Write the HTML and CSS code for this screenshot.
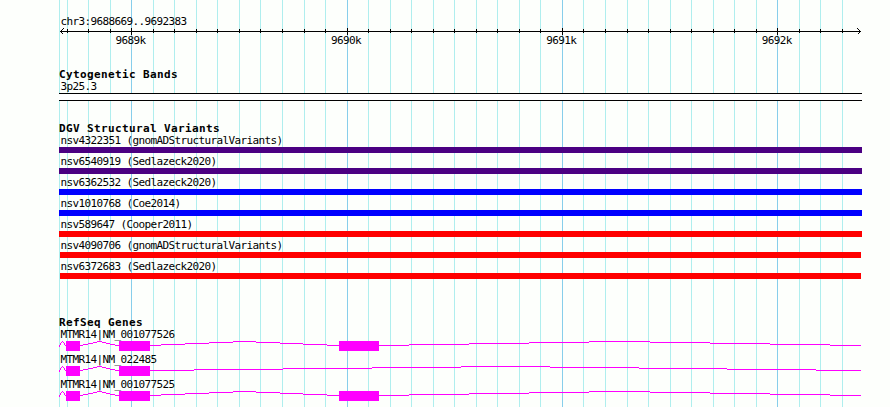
FILE: index.html
```
<!DOCTYPE html>
<html lang="en">
<head>
<meta charset="UTF-8" />
<title>chr3:9688669..9692383</title>
<link rel="stylesheet" href="styles.css">
</head>
<body>
<div class="browser">
    <!-- grid, every 100 bp, darker every 1 kb -->
    <svg class="grid" width="803" height="407" shape-rendering="crispEdges">
        <path class="grid-minor" d="M.5 0v407M8.5 0v407M29.5 0v407M51.5 0v407M94.5 0v407M115.5 0v407M137.5 0v407M158.5 0v407M180.5 0v407M201.5 0v407M223.5 0v407M245.5 0v407M266.5 0v407M309.5 0v407M331.5 0v407M352.5 0v407M374.5 0v407M395.5 0v407M417.5 0v407M438.5 0v407M460.5 0v407M481.5 0v407M524.5 0v407M546.5 0v407M568.5 0v407M589.5 0v407M611.5 0v407M632.5 0v407M654.5 0v407M675.5 0v407M697.5 0v407M740.5 0v407M761.5 0v407M783.5 0v407" />
        <path class="grid-major" d="M72.5 0v407M288.5 0v407M503.5 0v407M718.5 0v407" />
    </svg>

    <div class="ruler">
        <div class="label">chr3:9688669..9692383</div>
        <svg class="axis" width="803" height="7" shape-rendering="crispEdges">
            <path d="M1 3.5h801M8.5 1v4M29.5 1v4M51.5 1v4M94.5 1v4M115.5 1v4M137.5 1v4M158.5 1v4M180.5 1v4M201.5 1v4M223.5 1v4M245.5 1v4M266.5 1v4M309.5 1v4M331.5 1v4M352.5 1v4M374.5 1v4M395.5 1v4M417.5 1v4M438.5 1v4M460.5 1v4M481.5 1v4M524.5 1v4M546.5 1v4M568.5 1v4M589.5 1v4M611.5 1v4M632.5 1v4M654.5 1v4M675.5 1v4M697.5 1v4M740.5 1v4M761.5 1v4M783.5 1v4" />
            <path d="M72.5 0v7M288.5 0v7M503.5 0v7M718.5 0v7" />
            <path d="M4.5 .5l-3 3l3 3M798.5 .5l3 3l-3 3" />
        </svg>
        <div class="ticks">
            <span>9689k</span>
            <span>9690k</span>
            <span>9691k</span>
            <span>9692k</span>
        </div>
    </div>

    <div class="track cytoband">
        <h3>Cytogenetic Bands</h3>
        <div class="label">3p25.3</div>
        <div class="band"></div>
    </div>

    <div class="track variants">
        <h3>DGV Structural Variants</h3>
        <div class="label">nsv4322351 (gnomADStructuralVariants)</div>
        <div class="bar complex"></div>
        <div class="label">nsv6540919 (Sedlazeck2020)</div>
        <div class="bar complex"></div>
        <div class="label">nsv6362532 (Sedlazeck2020)</div>
        <div class="bar gain"></div>
        <div class="label">nsv1010768 (Coe2014)</div>
        <div class="bar gain"></div>
        <div class="label">nsv589647 (Cooper2011)</div>
        <div class="bar loss"></div>
        <div class="label">nsv4090706 (gnomADStructuralVariants)</div>
        <div class="bar loss inner"></div>
        <div class="label">nsv6372683 (Sedlazeck2020)</div>
        <div class="bar loss inner"></div>
    </div>

    <div class="track genes">
        <h3>RefSeq Genes</h3>
        <div class="label">MTMR14|NM_001077526</div>
        <svg class="gene" width="803" height="11" shape-rendering="crispEdges">
            <path class="intron" d="M.5 4v2M1.5 2v2M2.5 1v1M3 .5h1M4.5 1v1M5.5 2v2M6.5 4v1M21 4.5h3M24 3.5h5M29 2.5h5M34 1.5h4M38 .5h5M43 1.5h4M47 2.5h4M51 3.5h5M56 4.5h4M91 4.5h11M102 3.5h24M126 2.5h24M150 1.5h24M174 .5h23M197 1.5h24M221 2.5h23M244 3.5h24M268 4.5h12M320 4.5h30M350 3.5h60M410 2.5h60M470 1.5h60M530 .5h61M591 1.5h60M651 2.5h60M711 3.5h60M771 4.5h31" />
            <path class="exon" d="M7 0h14v10H7zM60 0h31v10H60zM280 0h40v10h-40z" />
        </svg>
        <div class="label">MTMR14|NM_022485</div>
        <svg class="gene" width="803" height="11" shape-rendering="crispEdges">
            <path class="intron" d="M.5 4v2M1.5 2v2M2.5 1v1M3 .5h1M4.5 1v1M5.5 2v2M6.5 4v1M21 4.5h3M24 3.5h5M29 2.5h5M34 1.5h4M38 .5h5M43 1.5h4M47 2.5h4M51 3.5h5M56 4.5h4M91 4.5h44M135 3.5h89M224 2.5h89M313 1.5h89M402 .5h89M491 1.5h89M580 2.5h88M668 3.5h89M757 4.5h45" />
            <path class="exon" d="M7 0h14v10H7zM60 0h31v10H60z" />
        </svg>
        <div class="label">MTMR14|NM_001077525</div>
        <svg class="gene" width="803" height="11" shape-rendering="crispEdges">
            <path class="intron" d="M.5 4v2M1.5 2v2M2.5 1v1M3 .5h1M4.5 1v1M5.5 2v2M6.5 4v1M21 4.5h3M24 3.5h5M29 2.5h5M34 1.5h4M38 .5h5M43 1.5h4M47 2.5h4M51 3.5h5M56 4.5h4M91 4.5h11M102 3.5h24M126 2.5h24M150 1.5h24M174 .5h23M197 1.5h24M221 2.5h23M244 3.5h24M268 4.5h12M320 4.5h30M350 3.5h60M410 2.5h60M470 1.5h60M530 .5h61M591 1.5h60M651 2.5h60M711 3.5h60M771 4.5h31" />
            <path class="exon" d="M7 0h14v10H7zM60 0h31v10H60zM280 0h40v10h-40z" />
        </svg>
    </div>
</div>
</body>
</html>
```
FILE: styles.css
```
body {
    margin: 0;
    overflow: hidden;
    background-color: #fdfffc;
    color: black;
    font-family: 'DejaVu Sans Mono', 'Liberation Mono', monospace;
    font-size: 11px;
    letter-spacing: -0.62px;
}

.browser {
    position: relative;
    width: 803px;
    height: 407px;
    margin-left: 59px;
    overflow: hidden;
}

svg {
    display: block;
}

.grid {
    position: absolute;
    top: 0;
    left: 0;
    z-index: -1;
}

.grid path,
.axis path,
.intron {
    fill: none;
    stroke-width: 1;
}

.grid .grid-minor { stroke: #afeeee; }
.grid .grid-major { stroke: #87ceeb; }

.label {
    height: 13px;
    line-height: 13px;
    padding-left: 1.4px;
    white-space: pre;
}

.ruler {
    padding-top: 15px;
}

.axis path {
    stroke: black;
}

.ticks {
    display: flex;
    gap: 185.4px;
    padding-left: 56.5px;
    height: 13px;
    line-height: 11px;
}

.ticks span {
    width: 30px;
}

.track h3 {
    margin: 0;
    height: 12px;
    line-height: 13px;
    font-size: 11px;
    font-weight: bold;
    letter-spacing: 0.38px;
}

.cytoband {
    padding-top: 20px;
}

.band {
    height: 6px;
    background: white;
    border-top: 1px solid black;
    border-bottom: 1px solid black;
}

.variants {
    padding-top: 21px;
}

.bar {
    height: 6px;
    margin-bottom: 2px;
}

.bar.complex { background: #4b0082; }
.bar.gain { background: blue; }
.bar.loss { background: red; }

.bar.inner {
    margin-left: 1px;
    margin-right: 1px;
}

.genes {
    padding-top: 35px;
}

.gene {
    margin-bottom: 1px;
}

.intron {
    stroke: magenta;
}

.exon {
    fill: magenta;
}
```
